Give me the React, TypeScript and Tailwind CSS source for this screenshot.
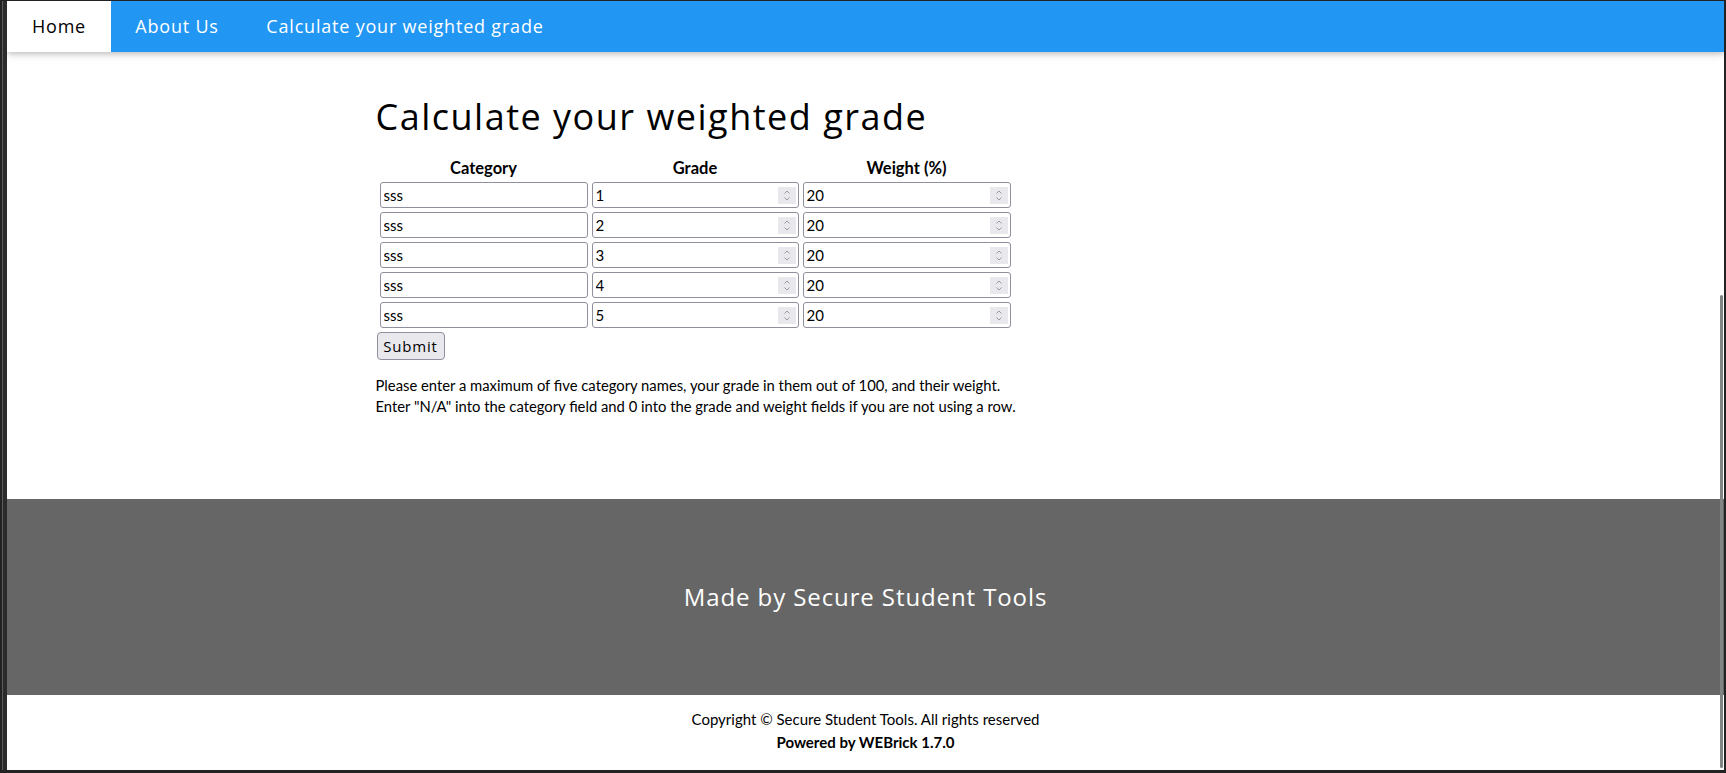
export default function App() {
  const rows = [
    { category: "sss", grade: "1", weight: "20" },
    { category: "sss", grade: "2", weight: "20" },
    { category: "sss", grade: "3", weight: "20" },
    { category: "sss", grade: "4", weight: "20" },
    { category: "sss", grade: "5", weight: "20" },
  ];

  const heading = "font-['Open_Sans',sans-serif]";

  return (
    <div className="flex h-screen w-full bg-[#222222] pb-[3px] pl-[2px] pr-[2px] pt-px">
      <div className="flex flex-1 border-l border-[#5c5c5c] bg-[#2b2b2b] pl-[4px]">
        <div className="relative flex flex-1 flex-col overflow-hidden bg-white font-['Lato',sans-serif] text-[15px] text-black">
          {/* NAV */}
          <nav className="relative z-10 flex h-[51px] shrink-0 bg-[#2196f3] shadow-[0_2px_5px_0_rgba(0,0,0,0.16),0_2px_10px_0_rgba(0,0,0,0.12)]">
            <a className={`${heading} flex w-[104px] items-center justify-center bg-white text-[18px] tracking-[0.8px] text-black`}>
              Home
            </a>
            <a className={`${heading} flex w-[132px] items-center justify-center text-[18px] tracking-[0.8px] text-white`}>
              About Us
            </a>
            <a className={`${heading} flex w-[324px] items-center justify-center text-[18px] tracking-[0.8px] text-white`}>
              Calculate your weighted grade
            </a>
          </nav>

          {/* MAIN */}
          <main className="h-[447px] shrink-0">
            <div className="mx-auto w-[980px] pt-[43px]">
              <h1 className={`${heading} text-[36px] font-normal leading-[44px] tracking-[1.5px]`}>
                Calculate your weighted grade
              </h1>

              <form className="ml-[4px] mt-[20px]">
                <div className="grid grid-cols-[208px_207px_208px] gap-x-[4px] gap-y-[4px]">
                  <div className="mb-[1px] text-center text-[16.5px] font-bold leading-[18px]">Category</div>
                  <div className="mb-[1px] text-center text-[16.5px] font-bold leading-[18px]">Grade</div>
                  <div className="mb-[1px] text-center text-[16.5px] font-bold leading-[18px]">Weight (%)</div>

                  {rows.map((row, i) => (
                    <Row key={i} {...row} />
                  ))}
                </div>

                <button
                  type="button"
                  className={`${heading} -ml-[3px] mt-[4px] flex h-[28px] w-[68px] items-center justify-center rounded-[4px] border border-[#8f8f9d] bg-[#e9e9ed] text-[15px] tracking-[0.8px] text-black`}
                >
                  Submit
                </button>
              </form>

              <p className="mt-[15px] text-[14.8px] leading-[21px]">
                Please enter a maximum of five category names, your grade in them out of 100, and their weight.
                <br />
                Enter "N/A" into the category field and 0 into the grade and weight fields if you are not using a
                row.
              </p>
            </div>
          </main>

          {/* FOOTER */}
          <footer className="flex h-[196px] shrink-0 items-center justify-center bg-[#666666]">
            <p className={`${heading} text-[24px] tracking-[0.9px] text-white`}>Made by Secure Student Tools</p>
          </footer>

          <div className="pt-[13px] text-center leading-[23px]">
            <p>Copyright © Secure Student Tools. All rights reserved</p>
            <p className="font-bold">Powered by WEBrick 1.7.0</p>
          </div>

          {/* overlay scrollbar thumb */}
          <div className="absolute bottom-[2px] right-px top-[294px] w-[3px] rounded-full bg-[#808682]" />
        </div>
      </div>
    </div>
  );
}

function Row({ category, grade, weight }: { category: string; grade: string; weight: string }) {
  return (
    <>
      <div className="flex h-[26px] items-center rounded-[3px] border border-[#8f8f9d] bg-white">
        <input
          readOnly
          value={category}
          className="h-full w-full bg-transparent pl-[3px] font-['Lato',sans-serif] text-[15px] text-black outline-none"
        />
      </div>
      <NumberBox value={grade} />
      <NumberBox value={weight} />
    </>
  );
}

function NumberBox({ value }: { value: string }) {
  return (
    <div className="flex h-[26px] items-center rounded-[3px] border border-[#8f8f9d] bg-white pr-[2px]">
      <input
        readOnly
        value={value}
        className="h-full min-w-0 flex-1 bg-transparent pl-[3px] font-['Lato',sans-serif] text-[15px] text-black outline-none"
      />
      <span className="flex h-[17px] w-[18px] items-center justify-center bg-[#e9e9ed]">
        <svg width="18" height="17" viewBox="0 0 18 17" fill="none">
          <path d="M6.5 6.5 L9 4 L11.5 6.5" stroke="#9a9aa4" strokeWidth="1" />
          <path d="M6.5 10.5 L9 13 L11.5 10.5" stroke="#9a9aa4" strokeWidth="1" />
        </svg>
      </span>
    </div>
  );
}
